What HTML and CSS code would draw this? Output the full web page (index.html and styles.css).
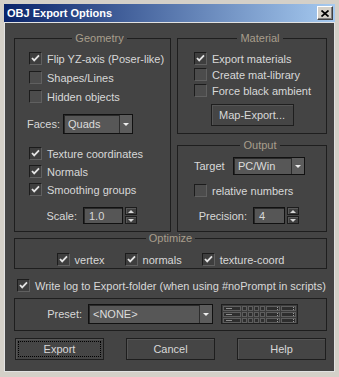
FILE: index.html
```html
<!DOCTYPE html>
<html lang="en">
<head>
    <meta charset="UTF-8">
    <title>OBJ Export Options</title>
    <link rel="stylesheet" href="styles.css">
</head>
<body>

<div class="window">
    <!-- Title bar -->
    <div class="titlebar">
        <span class="title">OBJ Export Options</span>
        <button class="close">
            <svg width="8" height="7" viewBox="0 0 8 7"><path d="M0.5 0.5 L7.5 6.5 M7.5 0.5 L0.5 6.5" stroke="#000" stroke-width="1.7" fill="none"/></svg>
        </button>
    </div>

    <div class="dialog">
        <div class="top">
            <!-- Geometry -->
            <fieldset class="group geometry">
                <legend>Geometry</legend>
                <label class="check mt7"><span class="box on"><svg width="11" height="11" viewBox="0 0 11 11"><path d="M2 5 L4.2 7.4 L9 2.4" stroke="#e4e4e4" stroke-width="1.8" fill="none"/></svg></span>Flip YZ-axis (Poser-like)</label>
                <label class="check mt6"><span class="box"></span>Shapes/Lines</label>
                <label class="check mt6"><span class="box"></span>Hidden objects</label>
                <div class="field-row faces mt11">
                    <span class="lbl">Faces:</span>
                    <div class="combo w70"><span class="value">Quads</span><span class="arrow"></span></div>
                </div>
                <label class="check mt13"><span class="box on"><svg width="11" height="11" viewBox="0 0 11 11"><path d="M2 5 L4.2 7.4 L9 2.4" stroke="#e4e4e4" stroke-width="1.8" fill="none"/></svg></span>Texture coordinates</label>
                <label class="check mt5"><span class="box on"><svg width="11" height="11" viewBox="0 0 11 11"><path d="M2 5 L4.2 7.4 L9 2.4" stroke="#e4e4e4" stroke-width="1.8" fill="none"/></svg></span>Normals</label>
                <label class="check mt5"><span class="box on"><svg width="11" height="11" viewBox="0 0 11 11"><path d="M2 5 L4.2 7.4 L9 2.4" stroke="#e4e4e4" stroke-width="1.8" fill="none"/></svg></span>Smoothing groups</label>
                <div class="field-row scale mt11">
                    <span class="lbl">Scale:</span>
                    <div class="spin">
                        <span class="spin-field w40">1.0</span>
                        <span class="spin-arrows"><span class="up"></span><span class="down"></span></span>
                    </div>
                </div>
            </fieldset>

            <div class="side">
                <!-- Material -->
                <fieldset class="group material">
                    <legend>Material</legend>
                    <label class="check mt7"><span class="box on"><svg width="11" height="11" viewBox="0 0 11 11"><path d="M2 5 L4.2 7.4 L9 2.4" stroke="#e4e4e4" stroke-width="1.8" fill="none"/></svg></span>Export materials</label>
                    <label class="check mt3"><span class="box"></span>Create mat-library</label>
                    <label class="check mt3"><span class="box"></span>Force black ambient</label>
                    <div class="center mt7">
                        <button class="btn map-export">Map-Export...</button>
                    </div>
                </fieldset>

                <!-- Output -->
                <fieldset class="group output">
                    <legend>Output</legend>
                    <div class="field-row target mt5">
                        <span class="lbl">Target</span>
                        <div class="combo w72 h18"><span class="value">PC/Win</span><span class="arrow"></span></div>
                    </div>
                    <label class="check mt9"><span class="box"></span>relative numbers</label>
                    <div class="field-row precision mt10">
                        <span class="lbl">Precision:</span>
                        <div class="spin">
                            <span class="spin-field w32">4</span>
                            <span class="spin-arrows"><span class="up"></span><span class="down"></span></span>
                        </div>
                    </div>
                </fieldset>
            </div>
        </div>

        <!-- Optimize -->
        <fieldset class="group optimize">
            <legend>Optimize</legend>
            <div class="opt-row mt8">
                <label class="check"><span class="box on"><svg width="11" height="11" viewBox="0 0 11 11"><path d="M2 5 L4.2 7.4 L9 2.4" stroke="#e4e4e4" stroke-width="1.8" fill="none"/></svg></span>vertex</label>
                <label class="check"><span class="box on"><svg width="11" height="11" viewBox="0 0 11 11"><path d="M2 5 L4.2 7.4 L9 2.4" stroke="#e4e4e4" stroke-width="1.8" fill="none"/></svg></span>normals</label>
                <label class="check"><span class="box on"><svg width="11" height="11" viewBox="0 0 11 11"><path d="M2 5 L4.2 7.4 L9 2.4" stroke="#e4e4e4" stroke-width="1.8" fill="none"/></svg></span>texture-coord</label>
            </div>
        </fieldset>

        <label class="check writelog mt10"><span class="box on"><svg width="11" height="11" viewBox="0 0 11 11"><path d="M2 5 L4.2 7.4 L9 2.4" stroke="#e4e4e4" stroke-width="1.8" fill="none"/></svg></span>Write log to Export-folder (when using #noPrompt in scripts)</label>

        <!-- Preset -->
        <div class="preset mt6">
            <span class="lbl">Preset:</span>
            <div class="combo w125"><span class="value">&lt;NONE&gt;</span><span class="arrow"></span></div>
            <svg class="preset-grid" width="77" height="20" viewBox="0 0 77 20">
                <rect x="0.5" y="0.5" width="76" height="19" fill="#3b3b3b" stroke="#1e1e1e"/>
                <g fill="#2e2e2e" stroke="#5e5e5e">
                    <rect x="2.5" y="2.5" width="17" height="4"/>
                    <rect x="21.5" y="2.5" width="4" height="4"/>
                    <rect x="27.5" y="2.5" width="4" height="4"/>
                    <rect x="33.5" y="2.5" width="4" height="4"/>
                    <rect x="39.5" y="2.5" width="4" height="4"/>
                    <rect x="45.5" y="2.5" width="13" height="4"/>
                    <rect x="60.5" y="2.5" width="14" height="4"/>

                    <rect x="2.5" y="8.5" width="17" height="4"/>
                    <rect x="21.5" y="8.5" width="4" height="4"/>
                    <rect x="27.5" y="8.5" width="4" height="4"/>
                    <rect x="33.5" y="8.5" width="4" height="4"/>
                    <rect x="39.5" y="8.5" width="4" height="4"/>
                    <rect x="45.5" y="8.5" width="13" height="4"/>
                    <rect x="60.5" y="8.5" width="14" height="4"/>

                    <rect x="2.5" y="14.5" width="17" height="4"/>
                    <rect x="21.5" y="14.5" width="4" height="4"/>
                    <rect x="27.5" y="14.5" width="4" height="4"/>
                    <rect x="33.5" y="14.5" width="4" height="4"/>
                    <rect x="39.5" y="14.5" width="4" height="4"/>
                    <rect x="45.5" y="14.5" width="13" height="4"/>
                    <rect x="60.5" y="14.5" width="14" height="4"/>
                </g>
                <g stroke="#8c8c8c">
                    <path d="M5 4.5 H11 M5 10.5 H11 M5 16.5 H11"/>
                </g>
                <g fill="#9a9a9a">
                    <rect x="56" y="3" width="1" height="1"/><rect x="56" y="5" width="1" height="1"/>
                    <rect x="72" y="3" width="1" height="1"/><rect x="72" y="5" width="1" height="1"/>
                    <rect x="56" y="9" width="1" height="1"/><rect x="56" y="11" width="1" height="1"/>
                    <rect x="72" y="9" width="1" height="1"/><rect x="72" y="11" width="1" height="1"/>
                    <rect x="56" y="15" width="1" height="1"/><rect x="56" y="17" width="1" height="1"/>
                    <rect x="72" y="15" width="1" height="1"/><rect x="72" y="17" width="1" height="1"/>
                </g>
            </svg>
        </div>

        <!-- Buttons -->
        <div class="actions mt7">
            <button class="btn wide focus">Export</button>
            <button class="btn wide">Cancel</button>
            <button class="btn wide">Help</button>
        </div>
    </div>
</div>

</body>
</html>
```

FILE: styles.css
```css
* {
    box-sizing: border-box;
}

body {
    margin: 0;
    background: #d4d0c8;
    font-family: "Liberation Sans", Arial, sans-serif;
    font-size: 11px;
    color: #d8d8d8;
}

.window {
    width: 339px;
    height: 377px;
    padding: 4px 4px 5px;
    background: #d4d0c8;
}

.titlebar {
    height: 18px;
    display: flex;
    align-items: center;
    justify-content: space-between;
    padding: 0 2px 0 3px;
    background: linear-gradient(to right, #0a246a, #a6caf0);
}

.title {
    color: #fff;
    font-weight: bold;
}

.close {
    width: 16px;
    height: 14px;
    padding: 0;
    display: flex;
    align-items: center;
    justify-content: center;
    background: #d4d0c8;
    border: 1px solid;
    border-color: #fff #404040 #404040 #fff;
    box-shadow: inset -1px -1px 0 #808080;
}

.dialog {
    height: 350px;
    background: #444;
    border: 1px solid #e2e2e2;
    padding: 9px 7px 7px 9px;
}

.top {
    display: flex;
    gap: 6px;
}

.side {
    width: 150px;
    display: flex;
    flex-direction: column;
    gap: 5px;
}

/* group boxes */
.group {
    margin: 0;
    padding: 0 0 7px;
    border: 1px solid #1e1e1e;
    min-width: 0;
}

.group legend {
    margin: 0 auto;
    padding: 0 3px;
    line-height: 13px;
    color: #a89e8c;
}

.geometry {
    width: 157px;
    padding-left: 14px;
}

.material,
.output {
    padding-left: 16px;
}

.optimize {
    padding-bottom: 2px;
}

/* checkboxes */
.check {
    display: flex;
    align-items: center;
    gap: 5px;
    height: 13px;
    white-space: nowrap;
}

.box {
    width: 13px;
    height: 13px;
    flex: none;
    display: flex;
    align-items: center;
    justify-content: center;
    background: #4c4c4c;
    border: 1px solid;
    border-color: #1c1c1c #606060 #606060 #1c1c1c;
}

.box.on {
    background: #3e3e3e;
}

/* labelled fields */
.field-row {
    display: flex;
    align-items: center;
}

.faces {
    margin-left: -2px;
}

.faces .lbl {
    width: 36px;
}

.scale {
    margin-left: -14px;
}

.scale .lbl {
    width: 62px;
    text-align: right;
    margin-right: 6px;
}

.target .lbl {
    width: 39px;
}

.precision {
    margin-left: -16px;
}

.precision .lbl {
    width: 69px;
    text-align: right;
    margin-right: 6px;
}

.combo {
    height: 20px;
    display: flex;
    background: #575757;
    border: 1px solid #111;
    box-shadow: inset 1px 1px 0 #2a2a2a;
}

.combo .value {
    flex: 1;
    padding-left: 4px;
    display: flex;
    align-items: center;
    color: #dcdcdc;
}

.combo .arrow {
    width: 13px;
    display: flex;
    align-items: center;
    justify-content: center;
    background: #5c5c5c;
    border-left: 1px solid #2c2c2c;
}

.combo .arrow::after {
    content: "";
    border-left: 3px solid transparent;
    border-right: 3px solid transparent;
    border-top: 3px solid #eee;
}

.w70 { width: 70px; }
.w72 { width: 72px; }
.w125 { width: 125px; }
.h18 { height: 18px; }

.spin {
    display: flex;
    gap: 2px;
}

.spin-field {
    height: 17px;
    display: flex;
    align-items: center;
    padding-left: 5px;
    background: #565656;
    border: 1px solid #111;
    box-shadow: inset 1px 1px 0 #2a2a2a;
}

.w40 { width: 40px; }
.w32 { width: 32px; }

.spin-arrows {
    display: flex;
    flex-direction: column;
    gap: 1px;
}

.spin-arrows span {
    width: 12px;
    height: 8px;
    display: flex;
    align-items: center;
    justify-content: center;
    background: #3f3f3f;
    border: 1px solid #1c1c1c;
    box-shadow: inset 1px 1px 0 #595959;
}

.spin-arrows .up::after {
    content: "";
    border-left: 3px solid transparent;
    border-right: 3px solid transparent;
    border-bottom: 3px solid #d8d8d8;
}

.spin-arrows .down::after {
    content: "";
    border-left: 3px solid transparent;
    border-right: 3px solid transparent;
    border-top: 3px solid #d8d8d8;
}

/* buttons */
.center {
    display: flex;
    justify-content: center;
    margin-left: -16px;
}

.btn {
    height: 22px;
    padding: 0;
    font-family: inherit;
    font-size: 11px;
    color: #d8d8d8;
    background: #454545;
    border: 1px solid #1e1e1e;
    box-shadow: inset 1px 1px 0 #555;
}

.map-export {
    width: 83px;
}

.opt-row {
    display: flex;
    justify-content: center;
    gap: 20px;
}

.writelog {
    padding-left: 3px;
}

.preset {
    height: 33px;
    display: flex;
    align-items: flex-start;
    padding-top: 5px;
    border: 1px solid #1e1e1e;
}

.preset .lbl {
    width: 67px;
    line-height: 20px;
    text-align: right;
    margin-right: 6px;
}

.preset-grid {
    margin-left: 8px;
}

.actions {
    display: flex;
    justify-content: space-between;
    padding: 0 1px;
}

.btn.wide {
    width: 89px;
}

.btn.focus {
    outline: 1px dotted #000;
    outline-offset: -4px;
}

/* spacing helpers */
.mt3 { margin-top: 3px; }
.mt5 { margin-top: 5px; }
.mt6 { margin-top: 6px; }
.mt7 { margin-top: 7px; }
.mt8 { margin-top: 8px; }
.mt9 { margin-top: 9px; }
.mt10 { margin-top: 10px; }
.mt11 { margin-top: 11px; }
.mt13 { margin-top: 13px; }
```
